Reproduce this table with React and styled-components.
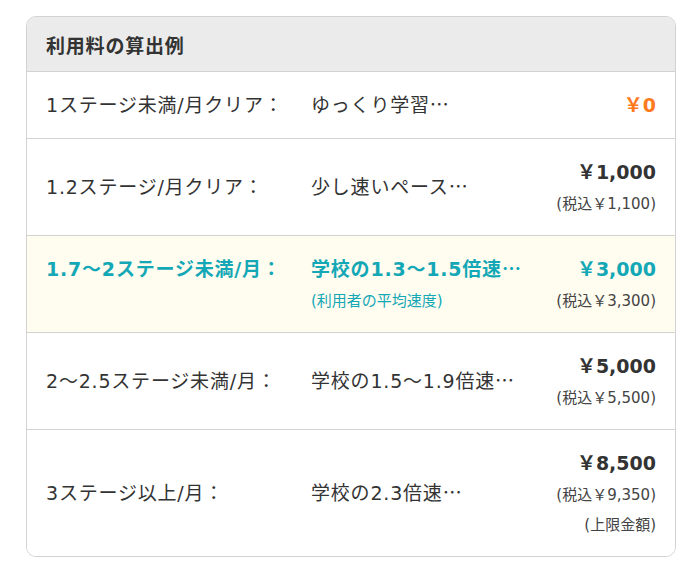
import React from 'react';
import styled, {createGlobalStyle, css} from 'styled-components';

const GlobalStyle = createGlobalStyle`
  body {
    margin: 0;
    background: #fff;
    font-family: "DejaVu Sans", "Noto Sans CJK JP", sans-serif;
    color: #333;
  }
`;

const TEAL = '#14a8b6';
const ORANGE = '#ff7a1c';

const Card = styled.section`
  box-sizing: border-box;
  width: 650px;
  margin: 16px 0 0 26px;
  border: 1px solid #d2d2d2;
  border-radius: 10px;
  overflow: hidden;
  background: #fff;
`;

const Header = styled.header`
  display: flex;
  align-items: center;
  height: 54px;
  padding: 0 19px;
  background: #ebebeb;
  border-bottom: 1px solid #d2d2d2;
`;

const Title = styled.h2`
  margin: 0;
  font-size: 19px;
  letter-spacing: 0.8px;
  font-weight: bold;
  color: #333;
`;

const Row = styled.div`
  display: flex;
  align-items: center;
  padding: 20px 19px;
  border-bottom: 1px solid #d2d2d2;
  background: ${p => (p.$featured ? '#fffcf0' : '#fff')};
  &:last-child {
    border-bottom: none;
  }
`;

const Plan = styled.div`
  flex: 1;
  display: grid;
  grid-template-columns: 265px 1fr;
  grid-template-rows: 26px;
  grid-auto-rows: 22px;
  row-gap: 8px;
  font-size: 19px;
  letter-spacing: 0.8px;
  line-height: 26px;
  ${p => p.$featured && css`
    color: ${TEAL};
    font-weight: bold;
  `}
`;

// the Japanese ellipsis is a full-width glyph
const Dots = styled.span`
  font-family: "Noto Sans CJK JP", sans-serif;
  line-height: 0;
`;

const Note = styled.div`
  grid-column: 2;
  font-size: 15px;
  line-height: 22px;
  letter-spacing: 0;
  font-weight: normal;
  color: ${TEAL};
`;

const Price = styled.div`
  display: flex;
  flex-direction: column;
  align-items: flex-end;
  gap: 8px;
`;

const Amount = styled.div`
  height: 26px;
  font-size: 19px;
  line-height: 26px;
  font-weight: bold;
  color: ${p => p.$color || '#333'};
`;

const Sub = styled.div`
  height: 22px;
  font-size: 15px;
  line-height: 22px;
  color: #444;
`;

const rows = [
    {label: '1ステージ未満/月クリア：', desc: 'ゆっくり学習', price: '￥0', color: ORANGE},
    {label: '1.2ステージ/月クリア：', desc: '少し速いペース', price: '￥1,000', subs: ['(税込￥1,100)']},
    {
        label: '1.7～2ステージ未満/月：', desc: '学校の1.3～1.5倍速', note: '(利用者の平均速度)',
        price: '￥3,000', subs: ['(税込￥3,300)'], color: TEAL, featured: true
    },
    {label: '2～2.5ステージ未満/月：', desc: '学校の1.5～1.9倍速', price: '￥5,000', subs: ['(税込￥5,500)']},
    {label: '3ステージ以上/月：', desc: '学校の2.3倍速', price: '￥8,500', subs: ['(税込￥9,350)', '(上限金額)']},
];

export default function App() {
    return (
        <>
            <GlobalStyle/>
            <Card lang="ja">
                <Header>
                    <Title>利用料の算出例</Title>
                </Header>
                {rows.map((r, i) => (
                    <Row key={i} $featured={r.featured}>
                        <Plan $featured={r.featured}>
                            <span>{r.label}</span>
                            <span>{r.desc}<Dots>…</Dots></span>
                            {r.note && <Note>{r.note}</Note>}
                        </Plan>
                        <Price>
                            <Amount $color={r.color}>{r.price}</Amount>
                            {(r.subs || []).map(s => <Sub key={s}>{s}</Sub>)}
                        </Price>
                    </Row>
                ))}
            </Card>
        </>
    );
}
